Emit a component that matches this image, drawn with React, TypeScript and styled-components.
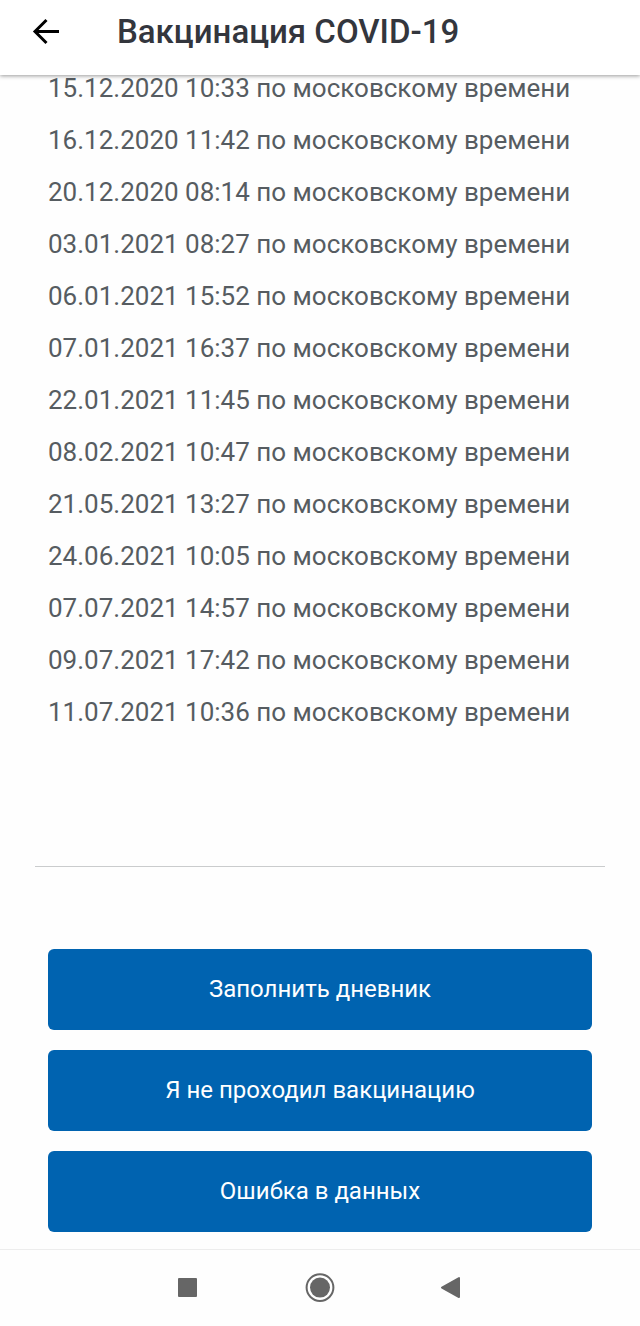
import React from "react";

import styled, { createGlobalStyle } from "styled-components";

const records: string[] = [
  "15.12.2020 10:33",
  "16.12.2020 11:42",
  "20.12.2020 08:14",
  "03.01.2021 08:27",
  "06.01.2021 15:52",
  "07.01.2021 16:37",
  "22.01.2021 11:45",
  "08.02.2021 10:47",
  "21.05.2021 13:27",
  "24.06.2021 10:05",
  "07.07.2021 14:57",
  "09.07.2021 17:42",
  "11.07.2021 10:36",
];

const actions: string[] = ["Заполнить дневник", "Я не проходил вакцинацию", "Ошибка в данных"];

function App() {
  return (
    <Screen>
      <GlobalStyle />
      <Header>
        <IconButton type="button" aria-label="Назад">
          <svg width="28" height="28" viewBox="0 0 28 28" fill="none" stroke="#000" strokeWidth="3">
            <path d="M27 13.5H3M14.5 2L3 13.5L14.5 25" />
          </svg>
        </IconButton>
        <Title>Вакцинация COVID-19</Title>
      </Header>
      <Content>
        <Records>
          {records.map((record) => (
            <Record key={record}>{record} по московскому времени</Record>
          ))}
        </Records>
        <Divider />
        <Actions>
          {actions.map((label) => (
            <ActionButton key={label} type="button">
              {label}
            </ActionButton>
          ))}
        </Actions>
      </Content>
      <NavBar>
        <IconButton type="button" aria-label="Недавние">
          <svg width="30" height="30" viewBox="0 0 30 30">
            <rect x="5" y="5" width="19" height="19" rx="1" fill="#666" />
          </svg>
        </IconButton>
        <IconButton type="button" aria-label="Домой">
          <svg width="30" height="30" viewBox="0 0 30 30">
            <circle cx="15" cy="14.6" r="13.4" fill="none" stroke="#666" strokeWidth="2" />
            <circle cx="15" cy="14.6" r="10" fill="#666" />
          </svg>
        </IconButton>
        <IconButton type="button" aria-label="Назад в системе">
          <svg width="30" height="30" viewBox="0 0 30 30">
            <path
              d="M22 5V24L5 14.6Z"
              fill="#666"
              stroke="#666"
              strokeWidth="2"
              strokeLinejoin="round"
            />
          </svg>
        </IconButton>
      </NavBar>
    </Screen>
  );
}

const GlobalStyle = createGlobalStyle`
  * {
    box-sizing: border-box;
  }

  body {
    margin: 0;
    background: #fefefe;
    font-family: Roboto, "Liberation Sans", sans-serif;
  }
`;

const Screen = styled.div`
  display: flex;
  flex-direction: column;
  min-height: 100vh;
`;

const Header = styled.header`
  display: flex;
  align-items: center;
  gap: 57px;
  height: 75px;
  padding: 0 32px 12px;
  background: #fff;
  box-shadow: 0 1px 4px rgba(0, 0, 0, 0.4);
  z-index: 1;
`;

const IconButton = styled.button`
  display: flex;
  padding: 0;
  border: none;
  background: none;
  cursor: pointer;
`;

const Title = styled.h1`
  margin: 0;
  color: #33363d;
  font-size: 33px;
  font-weight: 500;
  line-height: 40px;
`;

const Content = styled.main`
  flex: 1;
`;

const Records = styled.ul`
  display: grid;
  gap: 26px;
  margin: 0;
  padding: 0 48px;
  list-style: none;
`;

const Record = styled.li`
  color: #565c61;
  font-size: 26px;
  line-height: 26px;
`;

const Divider = styled.hr`
  height: 1px;
  margin: 141px 35px 82px;
  border: none;
  background: #cacccd;
`;

const Actions = styled.div`
  display: grid;
  gap: 20px;
  padding: 0 48px 16px;
`;

const ActionButton = styled.button`
  height: 81px;
  padding: 0 16px 2px;
  border: none;
  border-radius: 6px;
  background: #0063b0;
  color: #fff;
  font-family: inherit;
  font-size: 24px;
  line-height: 32px;
  cursor: pointer;
`;

const NavBar = styled.nav`
  display: flex;
  justify-content: center;
  align-items: center;
  gap: 102px;
  height: 77px;
  border-top: 1px solid #ededed;
`;

export default App;
